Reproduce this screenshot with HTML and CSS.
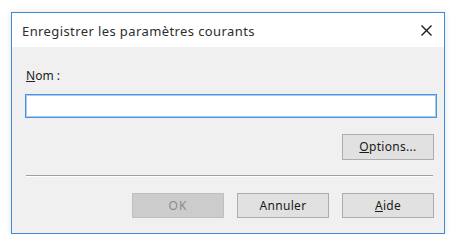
FILE: index.html
```html
<!DOCTYPE html>
<html>
<head>
    <meta charset="utf-8">
    <title>Enregistrer les paramètres courants</title>
    <link rel="stylesheet" href="styles.css">
</head>
<body>
<div class="dialog">
    <div class="dialog-title">
        <p>Enregistrer les paramètres courants</p>
        <a href="#" class="close">
            <svg width="11" height="11" viewBox="0 0 11 11">
                <path d="M0.5 0.5L10.5 10.5M10.5 0.5L0.5 10.5" stroke="#1a1a1a" stroke-width="1.4" fill="none"/>
            </svg>
        </a>
    </div>
    <div class="dialog-main">
        <label class="field-label" for="nom"><u>N</u>om :</label>
        <input type="text" id="nom" class="field">
        <div class="row-options">
            <a href="#" class="btn"><u>O</u>ptions...</a>
        </div>
        <div class="sep"></div>
        <div class="dialog-footer">
            <a href="#" class="btn disabled">OK</a>
            <a href="#" class="btn">Annuler</a>
            <a href="#" class="btn"><u>A</u>ide</a>
        </div>
    </div>
</div>
</body>
</html>
```

FILE: styles.css
```css
html,body{
    margin: 0;
    padding: 0;
    background: #fff;
}
p{
    margin: 0;
    padding: 0;
}
a{
    text-decoration: none;
    color: #000;
}
body{
    font-family: "Noto Sans", "Open Sans", sans-serif;
    font-size: 12px;
    color: #1e1e1e;
}
.dialog{
    margin: 12px 0 0 11px;
    width: 432px;
    height: 220px;
    border: 1px solid #3f8bd6;
    background: #f0f0f0;
    box-shadow: 0 0 6px rgba(0,0,0,0.12);
}
.dialog-title{
    display: flex;
    align-items: center;
    justify-content: space-between;
    height: 34px;
    background: #fff;
    padding: 0 9px 0 10px;
}
.dialog-title>p{
    font-size: 13px;
    letter-spacing: 0.4px;
    color: #2e2e2e;
    padding-top: 2px;
}
.close{
    display: flex;
    margin-right: 3px;
    margin-top: 1px;
}
.dialog-main{
    padding: 21px 7px 0 13px;
}
.field-label{
    display: block;
    line-height: 16px;
    padding-left: 1px;
    color: #222;
}
.field{
    display: block;
    box-sizing: border-box;
    width: 100%;
    height: 24px;
    margin-top: 10px;
    border: 1px solid #4a94dc;
    box-shadow: inset 0 0 0 1px #a7cdf0;
    background: #fff;
    outline: none;
}
.row-options{
    display: flex;
    justify-content: flex-end;
    margin: 16px 3px 0 0;
}
.btn{
    display: inline-block;
    box-sizing: border-box;
    width: 92px;
    height: 26px;
    line-height: 24px;
    text-align: center;
    background: #e1e1e1;
    border: 1px solid #adadad;
    color: #1a1a1a;
    letter-spacing: 0.3px;
}
.btn.disabled{
    background: #cccccc;
    border-color: #bfbfbf;
    color: #8a8a8a;
    letter-spacing: 1px;
}
.sep{
    height: 1px;
    margin: 15px 4px 0 1px;
    background: #a0a0a0;
    border-bottom: 1px solid #fff;
}
.dialog-footer{
    display: flex;
    justify-content: flex-end;
    gap: 13px;
    margin: 16px 3px 0 0;
}
.dialog-footer .btn{
    height: 25px;
    line-height: 23px;
}
```
